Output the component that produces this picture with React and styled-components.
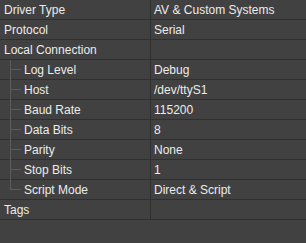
import React from "react";
import styled, { createGlobalStyle } from "styled-components";

const GlobalStyle = createGlobalStyle`
  html, body {
    margin: 0;
    padding: 0;
    background: #414141;
  }
  body {
    font-family: "Liberation Sans", Arial, sans-serif;
  }
`;

const Grid = styled.div`
  width: 306px;
  height: 243px;
  background: #414141;
  color: #ececec;
  font-size: 12px;
  overflow: hidden;
`;

const Row = styled.div`
  display: grid;
  grid-template-columns: 151px 1fr;
  height: 20px;
  box-sizing: border-box;
  border-bottom: 1px solid #2f2f2f;
`;

const NameCell = styled.div`
  position: relative;
  display: flex;
  align-items: center;
  padding-left: ${(p) => (p.child ? "24px" : "4px")};
  padding-top: 1px;
  border-right: 1px solid #2f2f2f;
  white-space: nowrap;
`;

const ValueCell = styled.div`
  display: flex;
  align-items: center;
  padding-left: 3px;
  padding-top: 1px;
  white-space: nowrap;
  overflow: hidden;
`;

/* tree connector for nested rows */
const Guide = styled.span`
  position: absolute;
  left: 10px;
  top: 0;
  width: 10px;
  height: ${(p) => (p.last ? "10px" : "20px")};
  border-left: 1px solid #5c5c5c;
  &::after {
    content: "";
    position: absolute;
    left: 0;
    top: 9px;
    width: 10px;
    border-top: 1px solid #5c5c5c;
  }
`;

const rows = [
  { name: "Driver Type", value: "AV & Custom Systems" },
  { name: "Protocol", value: "Serial" },
  { name: "Local Connection", value: "" },
  { name: "Log Level", value: "Debug", child: true },
  { name: "Host", value: "/dev/ttyS1", child: true },
  { name: "Baud Rate", value: "115200", child: true },
  { name: "Data Bits", value: "8", child: true },
  { name: "Parity", value: "None", child: true },
  { name: "Stop Bits", value: "1", child: true },
  { name: "Script Mode", value: "Direct & Script", child: true, last: true },
  { name: "Tags", value: "" },
];

export default function App() {
  return (
    <>
      <GlobalStyle />
      <Grid>
        {rows.map((r) => (
          <Row key={r.name}>
            <NameCell child={r.child}>
              {r.child && <Guide last={r.last} />}
              {r.name}
            </NameCell>
            <ValueCell>{r.value}</ValueCell>
          </Row>
        ))}
      </Grid>
    </>
  );
}
